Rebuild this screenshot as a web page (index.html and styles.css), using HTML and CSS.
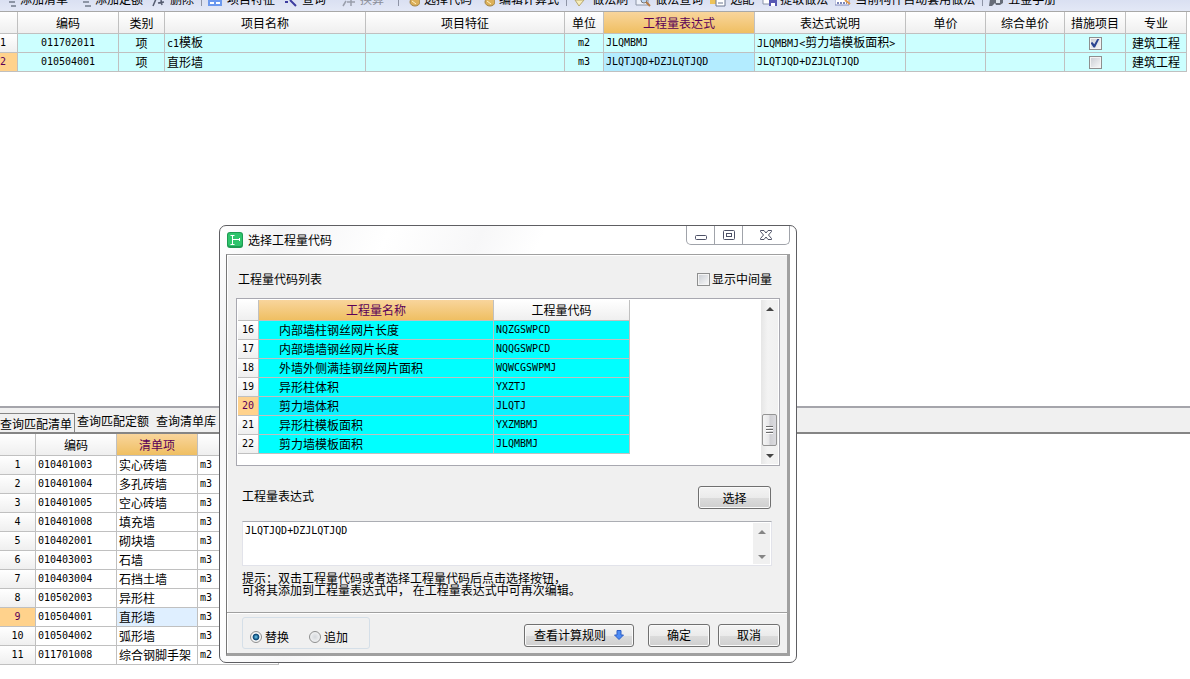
FILE: index.html
```
<!DOCTYPE html>
<html lang="zh-CN">
<head>
<meta charset="utf-8">
<title>选择工程量代码</title>
<link rel="stylesheet" href="styles.css">
</head>
<body>
<nav class="toolbar" aria-label="工具栏">
  <button class="tool"><svg viewBox="0 0 16 16"><path d="M9 11h6M11 15h5" stroke="#8d95a5" stroke-width="2"/></svg>添加清单</button>
  <button class="tool"><svg viewBox="0 0 16 16"><path d="M8 11h6M10 15h6" stroke="#8d95a5" stroke-width="2"/></svg>添加定额</button>
  <button class="tool"><svg viewBox="0 0 16 16"><path d="M6 8L3 15M8 12l6-1M11 9l1 5" stroke="#555c70" stroke-width="1.500" fill="none"/></svg>删除</button>
  <span class="sep"></span>
  <button class="tool"><svg viewBox="0 0 16 16"><path d="M1 4h14v11H1z" fill="#6b98ee"/><path d="M3 12h4M9 12h4" stroke="#fff" stroke-width="2"/></svg>项目特征</button>
  <button class="tool wide"><svg viewBox="0 0 16 16"><path d="M3 11h3M8 9l6 6" stroke="#3c3ca0" stroke-width="2"/></svg>查询</button>
  <button class="tool wide" disabled><svg viewBox="0 0 16 16"><path d="M3 15l3-5M7 11h8M11 9v6" stroke="#9a9fac" stroke-width="1.500"/></svg>换算</button>
  <span class="sep"></span>
  <button class="tool"><svg viewBox="0 0 16 16"><ellipse cx="11" cy="11" rx="5" ry="4" fill="#dcb05a" stroke="#a08346"/><path d="M8 10l4 3" stroke="#fff3c8"/></svg>选择代码</button>
  <button class="tool"><svg viewBox="0 0 16 16"><ellipse cx="11" cy="11" rx="5" ry="4" fill="#dcb05a" stroke="#a08346"/><path d="M8 10l4 3" stroke="#fff3c8"/></svg>编辑计算式</button>
  <span class="sep"></span>
  <button class="tool"><svg viewBox="0 0 16 16"><path d="M3 9l4 6 5-6z" fill="#f7ecb8" stroke="#b5a771"/></svg>做法刷</button>
  <button class="tool"><svg viewBox="0 0 16 16"><path d="M1 3h12v11H1z" fill="#eef2fb" stroke="#8b94a6"/><circle cx="9" cy="9" r="3" fill="#bcd6f2" stroke="#777"/><path d="M11 11l4 4" stroke="#b57b45" stroke-width="2"/></svg>做法查询</button>
  <button class="tool"><svg viewBox="0 0 16 16"><path d="M0 5h8v8H0z" fill="#edc35a"/><path d="M6 5h9v10H6z" fill="#fff" stroke="#6b7690"/><path d="M8 12h5" stroke="#6b7690"/></svg>选配</button>
  <button class="tool narrow"><svg viewBox="0 0 16 16"><path d="M2 3h8v10H2z" fill="#fff" stroke="#8993a8"/><path d="M8 7h8v8H8z" fill="#5658b4"/><path d="M10 12h4v3h-4z" fill="#fff"/></svg>提取做法</button>
  <button class="tool"><svg viewBox="0 0 16 16"><path d="M0 4h14v10H0z" fill="#fff" stroke="#7c86bb"/><path d="M2 12h10" stroke="#7c86bb" stroke-width="2" stroke-dasharray="2 1"/><path d="M10 9l5 4" stroke="#e39a4a" stroke-width="2"/></svg>当前构件自动套用做法</button>
  <span class="sep"></span>
  <button class="tool"><svg viewBox="0 0 16 16"><path d="M2 8h13v4l-3 2H8l-1-2-3 3H1z" fill="#666c78"/><path d="M8 9h4v3H8z" fill="#dfe5ee"/></svg>五金手册</button>
</nav>

<main class="bill">
  <table class="grid bill-grid">
    <colgroup><col class="w18"><col class="w101"><col class="w46"><col><col class="w199"><col class="w39"><col class="w151"><col class="w151"><col class="w80"><col class="w79"><col class="w61"><col class="w61"></colgroup>
    <thead><tr><th></th><th>编码</th><th>类别</th><th>项目名称</th><th>项目特征</th><th>单位</th><th class="hot">工程量表达式</th><th>表达式说明</th><th>单价</th><th>综合单价</th><th>措施项目</th><th>专业</th></tr></thead>
    <tbody>
      <tr><th class="edge mono">1</th><td class="mid mono">011702011</td><td class="mid">项</td><td><span class="mono">c1</span>模板</td><td></td><td class="mid mono">m2</td><td class="mono">JLQMBMJ</td><td><span class="mono">JLQMBMJ&lt;</span>剪力墙模板面积<span class="mono">&gt;</span></td><td></td><td></td><td class="mid"><input type="checkbox" class="box" aria-label="措施项目 1" checked></td><td class="mid">建筑工程</td></tr>
      <tr><th class="edge mono current">2</th><td class="mid mono">010504001</td><td class="mid">项</td><td>直形墙</td><td></td><td class="mid mono">m3</td><td class="mono active">JLQTJQD+DZJLQTJQD</td><td class="mono">JLQTJQD+DZJLQTJQD</td><td></td><td></td><td class="mid"><input type="checkbox" class="box" aria-label="措施项目 2"></td><td class="mid">建筑工程</td></tr>
    </tbody>
  </table>
</main>

<section class="lookup">
  <div class="tabs">
    <button class="tab on">查询匹配清单</button>
    <button class="tab">查询匹配定额</button>
    <button class="tab">查询清单库</button>
  </div>
  <table class="grid lookup-grid">
    <colgroup><col class="w36"><col class="w81"><col class="w81"><col class="w81"></colgroup>
    <thead><tr><th></th><th>编码</th><th class="hot">清单项</th><th></th></tr></thead>
    <tbody>
      <tr><th class="mono">1</th><td class="mono">010401003</td><td>实心砖墙</td><td class="mono">m3</td></tr>
      <tr><th class="mono">2</th><td class="mono">010401004</td><td>多孔砖墙</td><td class="mono">m3</td></tr>
      <tr><th class="mono">3</th><td class="mono">010401005</td><td>空心砖墙</td><td class="mono">m3</td></tr>
      <tr><th class="mono">4</th><td class="mono">010401008</td><td>填充墙</td><td class="mono">m3</td></tr>
      <tr><th class="mono">5</th><td class="mono">010402001</td><td>砌块墙</td><td class="mono">m3</td></tr>
      <tr><th class="mono">6</th><td class="mono">010403003</td><td>石墙</td><td class="mono">m3</td></tr>
      <tr><th class="mono">7</th><td class="mono">010403004</td><td>石挡土墙</td><td class="mono">m3</td></tr>
      <tr><th class="mono">8</th><td class="mono">010502003</td><td>异形柱</td><td class="mono">m3</td></tr>
      <tr><th class="mono current">9</th><td class="mono">010504001</td><td class="picked">直形墙</td><td class="mono">m3</td></tr>
      <tr><th class="mono">10</th><td class="mono">010504002</td><td>弧形墙</td><td class="mono">m3</td></tr>
      <tr><th class="mono">11</th><td class="mono">011701008</td><td>综合钢脚手架</td><td class="mono">m2</td></tr>
    </tbody>
  </table>
</section>

<div class="dialog" role="dialog" aria-labelledby="dialog-title">
  <header class="titlebar">
    <svg class="logo" viewBox="0 0 16 16"><rect width="16" height="16" rx="3" fill="#1d9b52"/><rect x="1" y="1" width="14" height="13" rx="2" fill="#2fc46c"/><path d="M5.500 3v10M3.500 3.500h4M3.500 12.500h4M5.500 7.500h7M12.500 6v3" stroke="#fff" fill="none"/></svg>
    <h1 id="dialog-title">选择工程量代码</h1>
    <div class="controls">
      <button class="ctl" aria-label="最小化"><svg viewBox="0 0 12 12"><rect x="0.5" y="6.5" width="11" height="4" rx="1" fill="#fff" stroke="#4d5166"/></svg></button>
      <button class="ctl" aria-label="最大化"><svg viewBox="0 0 12 12"><rect x="0.5" y="1.5" width="11" height="9" rx="1" fill="#fff" stroke="#4d5166"/><rect x="3.5" y="4.5" width="5" height="3" fill="#fff" stroke="#4d5166"/></svg></button>
      <button class="ctl close" aria-label="关闭"><svg viewBox="0 0 12 12"><path d="M.5 1.500h3.500l2 2.500 2-2.500h3.500v1L8.500 6l3 3.500v1H8L6 8 4 10.500H.5v-1L3.500 6l-3-3.500z" fill="#fff" stroke="#4d5166"/></svg></button>
    </div>
  </header>
  <div class="frame">
    <div class="head">
      <h2>工程量代码列表</h2>
      <label class="check"><input type="checkbox" class="box">显示中间量</label>
    </div>
    <div class="list">
      <table class="grid code-grid">
        <colgroup><col class="w21"><col class="w235"><col class="w136"></colgroup>
        <thead><tr><th></th><th class="hot">工程量名称</th><th>工程量代码</th></tr></thead>
        <tbody>
          <tr><th class="mono">16</th><td>内部墙柱钢丝网片长度</td><td class="mono">NQZGSWPCD</td></tr>
          <tr><th class="mono">17</th><td>内部墙墙钢丝网片长度</td><td class="mono">NQQGSWPCD</td></tr>
          <tr><th class="mono">18</th><td>外墙外侧满挂钢丝网片面积</td><td class="mono">WQWCGSWPMJ</td></tr>
          <tr><th class="mono">19</th><td>异形柱体积</td><td class="mono">YXZTJ</td></tr>
          <tr class="sel"><th class="mono current">20</th><td>剪力墙体积</td><td class="mono">JLQTJ</td></tr>
          <tr><th class="mono">21</th><td>异形柱模板面积</td><td class="mono">YXZMBMJ</td></tr>
          <tr><th class="mono">22</th><td>剪力墙模板面积</td><td class="mono">JLQMBMJ</td></tr>
        </tbody>
      </table>
      <div class="scroll">
        <svg class="arrow" viewBox="0 0 8 4"><path d="M0 4l4-4 4 4z" fill="#444"/></svg>
        <span class="thumb"><i></i><i></i><i></i></span>
        <svg class="arrow" viewBox="0 0 8 4"><path d="M0 0h8L4 4z" fill="#444"/></svg>
      </div>
    </div>
    <div class="expr-head">
      <label for="expr">工程量表达式</label>
      <button class="btn pick">选择</button>
    </div>
    <div class="expr">
      <textarea id="expr" class="mono" spellcheck="false">JLQTJQD+DZJLQTJQD</textarea>
      <div class="scroll idle">
        <svg class="arrow" viewBox="0 0 8 4"><path d="M0 4l4-4 4 4z" fill="#858585"/></svg>
        <svg class="arrow" viewBox="0 0 8 4"><path d="M0 0h8L4 4z" fill="#858585"/></svg>
      </div>
    </div>
    <p class="hint">提示：双击工程量代码或者选择工程量代码后点击选择按钮，<br>可将其添加到工程量表达式中， 在工程量表达式中可再次编辑。</p>
    <footer class="foot">
      <fieldset class="modes">
        <label><input type="radio" name="mode" checked>替换</label>
        <label><input type="radio" name="mode">追加</label>
      </fieldset>
      <button class="btn rules">查看计算规则<svg viewBox="0 0 10 10"><path d="M3 .5h4V5h2.500L5 9.500.5 5H3z" fill="#4d8bf5" stroke="#2f5fc4"/></svg></button>
      <button class="btn ok">确定</button>
      <button class="btn">取消</button>
    </footer>
  </div>
</div>
</body>
</html>
```
FILE: styles.css
```
* { box-sizing: border-box; }

body {
  position: relative;
  display: flex;
  flex-direction: column;
  min-height: 100vh;
  margin: 0;
  overflow: hidden;
  background: #fff;
  color: #000;
  font: 12px/16px "Noto Sans CJK SC", sans-serif;
}

button, input, textarea { margin: 0; padding: 0; font: inherit; color: inherit; }
h1, h2, p { margin: 0; font: inherit; }
svg { flex: none; display: block; }

.mono { font-family: "DejaVu Sans Mono", "Noto Sans CJK SC", monospace; font-size: 10px; }

/* Toolbar */
.toolbar {
  display: flex;
  align-items: flex-end;
  height: 12px;
  padding-bottom: 5px;
  overflow: hidden;
  background: linear-gradient(#dae0f2, #e3e8f6);
  border-bottom: 1px solid #a8a8a8;
}
.tool {
  flex: none;
  display: flex;
  align-items: center;
  gap: 4px;
  height: 14px;
  margin-right: 7px;
  border: 0;
  background: none;
  line-height: 14px;
  white-space: nowrap;
}
.tool svg { width: 16px; height: 16px; }
.tool.wide { margin-right: 14px; }
.tool.narrow { gap: 3px; }
.tool:disabled { color: #8c8f99; }
.sep { flex: none; width: 1px; height: 14px; margin-right: 5px; background: #8e94a6; }

/* Grids */
.grid { border-collapse: separate; border-spacing: 0; table-layout: fixed; }
.grid th, .grid td {
  height: 19px;
  padding: 0 2px;
  border-right: 1px solid #c0c0c0;
  border-bottom: 1px solid #c0c0c0;
  font-weight: normal;
  line-height: 16px;
  text-align: left;
  white-space: nowrap;
  overflow: hidden;
}
.grid th { padding: 0; text-align: center; background: linear-gradient(#fff, #efefef); }
.grid thead th { height: 22px; }
.grid .hot { background: linear-gradient(#f9d59c, #efbf62); color: #5a0058; }
.grid .current { background: #ffd28c; color: #5a0058; }
.grid .mid { padding: 0; text-align: center; }
.grid .edge { text-align: left; }
.grid td:has(.box) { padding: 2px 0; }

.w18 { width: 18px; }
.w21 { width: 21px; }
.w36 { width: 36px; }
.w39 { width: 39px; }
.w46 { width: 46px; }
.w61 { width: 61px; }
.w79 { width: 79px; }
.w80 { width: 80px; }
.w81 { width: 81px; }
.w101 { width: 101px; }
.w136 { width: 136px; }
.w151 { width: 151px; }
.w199 { width: 199px; }
.w235 { width: 235px; }

.bill { flex: 1; padding-right: 3px; }
.bill-grid { width: 100%; }
.bill-grid td { background: #cff; }
.bill-grid .active { background: #b3ecff; }

/* Check boxes */
.box {
  appearance: none;
  flex: none;
  display: block;
  width: 13px;
  height: 13px;
  margin: 0 auto;
  border: 1px solid #8e8f8f;
  background: linear-gradient(135deg, #c8ccd2, #fafafa);
  box-shadow: inset 0 0 0 1px #f4f4f4;
}
.box:checked::after {
  content: "";
  display: block;
  width: 9px;
  height: 9px;
  margin: 1px;
  background: #2c4591;
  clip-path: polygon(0 50%, 20% 40%, 42% 65%, 78% 0, 100% 0, 50% 100%, 34% 100%);
}

/* Lookup panel */
.lookup { padding-bottom: 14px; }
.tabs {
  display: flex;
  height: 28px;
  padding-top: 5px;
  background: #f0f0f0;
  border-top: 2px solid #a5a5ab;
  border-bottom: 2px solid #858585;
}
.tab { height: 16px; padding: 0 5px 0 2px; border: 0; background: none; line-height: 16px; }
.tab.on {
  width: 75px;
  height: 19px;
  padding: 2px 0 0;
  border: solid #858585;
  border-width: 1px 1px 0 0;
  text-align: left;
}
.lookup-grid { width: 279px; }
.lookup-grid .picked { background: #dfefff; }

/* Dialog window */
.dialog {
  position: absolute;
  left: 219px;
  top: 225px;
  width: 578px;
  padding: 0 6px 6px;
  border: 1px solid #5e5e62;
  border-radius: 7px;
  background: linear-gradient(115deg, #fff 0, #f4f4f5 8%, #fff 22%, #f7f7f8 34%, #fff 42%);
}
.titlebar { display: flex; align-items: center; height: 28px; }
.logo { width: 16px; height: 16px; margin: 0 5px 0 1px; }
.titlebar h1 { flex: 1; }
.controls {
  align-self: flex-start;
  display: flex;
  height: 19px;
  border: 1px solid #a0a3aa;
  border-top: 0;
  border-radius: 0 0 5px 5px;
}
.ctl {
  display: flex;
  align-items: center;
  justify-content: center;
  width: 28px;
  border: 0;
  border-right: 1px solid #a0a3aa;
  background: none;
}
.ctl.close { width: 46px; border-right: 0; }
.ctl svg { width: 12px; height: 12px; }

.frame {
  border: solid #a0a0a0;
  border-width: 1px 3px 3px 1px;
  border-left-color: #777;
  background: #f0f0f0;
  box-shadow: inset 1px 1px #fff;
}
.head {
  display: flex;
  align-items: center;
  justify-content: space-between;
  height: 43px;
  padding: 5px 15px 0 11px;
}
.check { display: flex; align-items: center; gap: 2px; }

.list {
  display: flex;
  justify-content: space-between;
  height: 168px;
  margin: 0 7px 0 9px;
  padding: 1px;
  border: 1px solid #a8a8b0;
  background: #fff;
}
.code-grid { width: 392px; height: 154px; }
.code-grid thead th { height: 21px; }
.code-grid td { background: #0ff; }
.code-grid td:nth-child(2) { padding-left: 20px; }
.code-grid .sel td { background: #0cf2ff; }

.scroll {
  display: flex;
  flex-direction: column;
  align-items: center;
  width: 17px;
  padding: 7px 0 6px;
  background: linear-gradient(90deg, #e6e6e6, #f3f3f3 40%, #f0f0f0);
}
.arrow { width: 8px; height: 4px; }
.thumb {
  display: flex;
  flex-direction: column;
  align-items: center;
  justify-content: center;
  gap: 1px;
  width: 15px;
  height: 32px;
  margin: auto 0 8px;
  border: 1px solid #949494;
  border-radius: 2px;
  background: linear-gradient(90deg, #f5f5f5, #e6e6e8 48%, #cfcfd3 52%, #dcdce0);
}
.thumb i { width: 7px; height: 2px; background: #6a6a6a; border-bottom: 1px solid #fff; }

.expr-head {
  display: flex;
  align-items: flex-start;
  justify-content: space-between;
  height: 55px;
  padding: 20px 16px 0 15px;
}
.expr-head label { padding-top: 2px; }
.btn {
  display: flex;
  align-items: center;
  justify-content: center;
  width: 62px;
  height: 23px;
  border: 1px solid #707070;
  border-radius: 3px;
  background: linear-gradient(#f4f4f4 0, #ebebeb 50%, #dcdcdc 50%, #cfcfcf 100%);
  box-shadow: inset 0 0 0 1px #fafafa;
}
.pick { width: 73px; }

.expr {
  display: flex;
  height: 45px;
  margin: 0 15px;
  border: 1px solid #e2e3ea;
  border-top-color: #abadb3;
  background: #fff;
}
.expr textarea {
  flex: 1;
  padding: 1px 2px;
  border: 0;
  outline: 0;
  resize: none;
  background: none;
  line-height: 16px;
}
.scroll.idle { justify-content: space-between; margin: 1px; padding: 7px 0 5px; background: #f0f0f0; }

.hint { height: 46px; padding: 6px 15px 0; line-height: 12px; }

.foot {
  display: flex;
  align-items: center;
  height: 41px;
  padding: 4px 7px 0 15px;
  border-top: 1px solid #a0a0a0;
  box-shadow: inset 0 1px #fff;
}
.modes {
  display: flex;
  align-items: center;
  gap: 20px;
  width: 128px;
  height: 32px;
  margin: 0 auto 4px 0;
  padding: 8px 7px 0;
  border: 1px solid #d5dfe8;
  border-radius: 3px;
}
.modes label { display: flex; align-items: center; gap: 3px; }
.modes input {
  appearance: none;
  width: 12px;
  height: 12px;
  border: 1px solid #8e8f8f;
  border-radius: 50%;
  background: radial-gradient(#d5d8dc, #fbfbfb);
}
.modes input:checked { background: radial-gradient(circle at 50% 50%, #6fd0f5 0, #134f7d 35%, #134f7d 45%, #f4f4f4 52%); }
.rules { gap: 8px; width: 110px; margin-right: 14px; }
.rules svg { width: 10px; height: 10px; }
.ok { margin-right: 8px; }
```
